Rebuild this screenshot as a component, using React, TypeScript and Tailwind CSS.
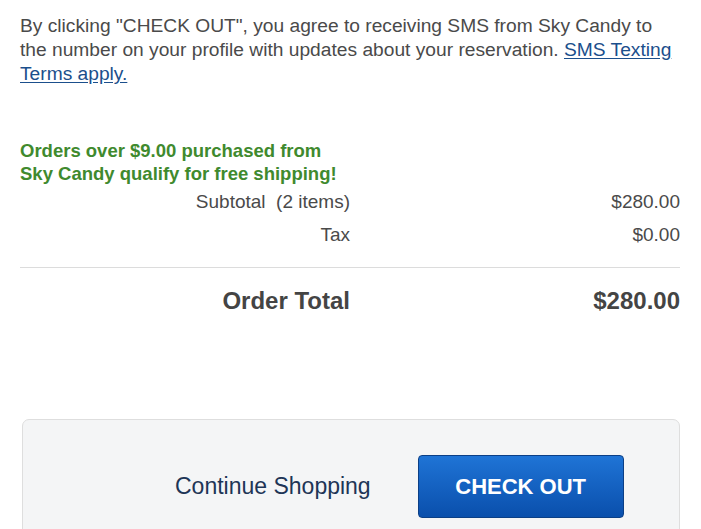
export default function App() {
  return (
    <div className="min-h-[529px] w-[701px] overflow-hidden bg-white font-['Liberation_Sans',Arial,sans-serif] text-[#4a4a4a]">
      <div className="pl-5 pr-[21px] pt-[14px]">
        <p className="whitespace-nowrap text-[19.2px] leading-[24px]">
          By clicking "CHECK OUT", you agree to receiving SMS from Sky Candy to
          <br />
          the number on your profile with updates about your reservation.{' '}
          <a href="#" className="text-[#1b4f8c] underline underline-offset-2">
            SMS Texting
            <br />
            Terms apply.
          </a>
        </p>

        <p className="mt-[53px] text-[18.5px] font-bold leading-[23px] text-[#3f8a2e]">
          Orders over $9.00 purchased from
          <br />
          Sky Candy qualify for free shipping!
        </p>

        <div className="mt-[6px] flex flex-col gap-[11px] text-[19px] leading-[22px]">
          <div className="flex">
            <span className="w-[330px] text-right">Subtotal&nbsp; (2 items)</span>
            <span className="flex-1 text-right">$280.00</span>
          </div>
          <div className="flex">
            <span className="w-[330px] text-right">Tax</span>
            <span className="flex-1 text-right">$0.00</span>
          </div>
        </div>

        <div className="mt-[21px] h-px bg-[#dcdcdc]" />

        <div className="mt-[19px] flex text-[24px] font-bold leading-[28px] text-[#444]">
          <span className="w-[330px] text-right">Order Total</span>
          <span className="flex-1 text-right">$280.00</span>
        </div>
      </div>

      <div className="mt-[104px] ml-[22px] mr-[21px] h-[140px] rounded-t-[7px] border border-[#dedede] bg-[#f4f5f6]">
        <div className="flex items-center pt-[35px]">
          <span className="ml-[152px] text-[23px] text-[#1e3556]">Continue Shopping</span>
          <button className="ml-[47px] flex h-[63px] w-[206px] items-center justify-center rounded-[4px] border border-[#0b3f86] bg-gradient-to-b from-[#1f74d6] to-[#0a4fac] text-[22px] font-bold text-white">
            CHECK OUT
          </button>
        </div>
      </div>
    </div>
  );
}
